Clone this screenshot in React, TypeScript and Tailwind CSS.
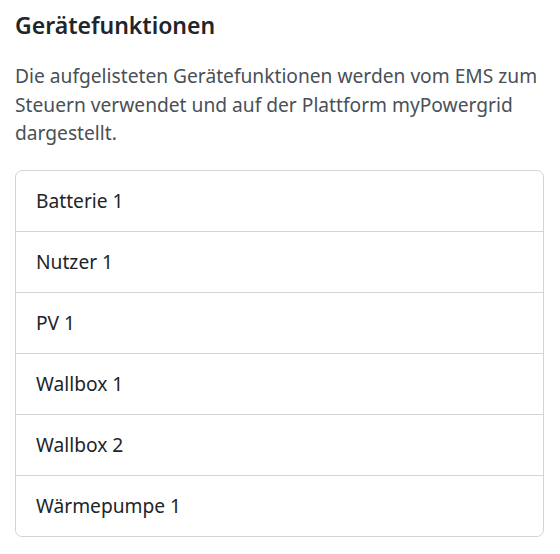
export default function App() {
  const items = ["Batterie 1", "Nutzer 1", "PV 1", "Wallbox 1", "Wallbox 2", "Wärmepumpe 1"];
  return (
    <div
      className="bg-white pl-[15px] pr-4 pt-[11px] text-[#212529]"
      style={{ fontFamily: '"Noto Sans", "Open Sans", sans-serif' }}
    >
      <h5 className="m-0 text-[23px] font-semibold leading-[28.8px]">Gerätefunktionen</h5>
      <p className="mt-[22px] text-[19.2px] leading-[28.8px] text-[#495057]">
        Die aufgelisteten Gerätefunktionen werden vom EMS zum Steuern verwendet und auf der Plattform myPowergrid dargestellt.
      </p>
      <ul className="mt-[22px] flex flex-col divide-y divide-[#d3d4d6] rounded-[7px] border border-[#d3d4d6]">
        {items.map((it) => (
          <li key={it} className="px-[20px] py-[15.6px] text-[19.2px] leading-[28.8px]">
            {it}
          </li>
        ))}
      </ul>
    </div>
  );
}
